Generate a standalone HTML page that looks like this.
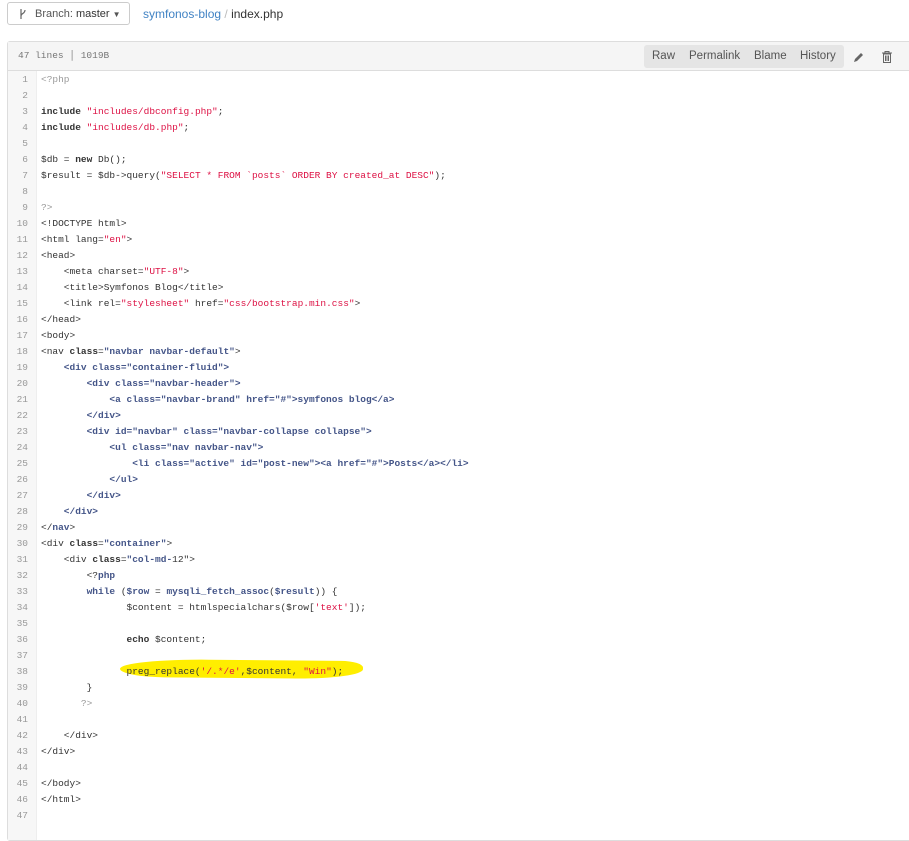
<!DOCTYPE html>
<html><head><meta charset="utf-8"><style>
body{margin:0;background:#fff;width:909px;height:796px;overflow:hidden;position:relative;font-family:"Liberation Sans",sans-serif}
.branch{position:absolute;left:7px;top:2px;width:123px;height:23px;border:1px solid #ccc;border-radius:3px;font-size:11px;color:#555;line-height:23px;box-sizing:border-box}
.branch span{position:absolute;left:27px;top:0}
.bc{position:absolute;left:143px;top:7px;font-size:12px;color:#333}
.box{position:absolute;left:7px;top:41px;width:910px;height:800px;border:1px solid #ddd;border-radius:3px;box-sizing:border-box}
.hdr{height:29px;background:#f5f5f5;border-bottom:1px solid #ddd;position:relative;box-sizing:border-box}
.meta{position:absolute;left:10px;top:8px;font:9.5px "Liberation Mono",monospace;color:#777}
.grp{position:absolute;left:636px;top:3px;width:200px;height:23px;background:#e5e5e5;border-radius:3px;font-size:11.5px;color:#555;line-height:23px}
.grp span{position:absolute}
.gut{position:absolute;left:0;top:29px;width:28px;bottom:0;background:#f7f7f7;border-right:1px solid #eee}
.code{position:absolute;left:0;top:30px;font:9.5px/16px "Liberation Mono",monospace;color:#333;white-space:pre}
.ln{display:inline-block;width:20px;text-align:right;color:#999;margin-right:13px}
.s{color:#d14}.k{font-weight:bold;color:#333}.n{font-weight:bold;color:#445588}.c{color:#999}
.hl{position:absolute;left:120px;top:660px;width:243px;height:18px;background:#ffee00;border-radius:40% 10% 30% 20%/60% 40% 60% 50%;transform:rotate(0.5deg)}
</style></head><body>
<div class="branch"><svg style="position:absolute;left:11px;top:5px" width="8" height="12" viewBox="0 0 8 12"><path d="M2 1v10M2 8c0-3 4-2 4-6" stroke="#666" fill="none" stroke-width="1.2"/></svg><span>Branch: <span style="position:static;color:#333">master</span> <span style="position:static;font-size:8px">▼</span></span></div>
<div class="bc"><span style="color:#4183c4">symfonos-blog</span> <span style="color:#bbb">/</span> index.php</div>
<div class="hl"></div>
<div class="box">
<div class="hdr"><div class="meta">47 lines │ 1019B</div>
<div class="grp"><span style="left:8px">Raw</span><span style="left:45px">Permalink</span><span style="left:110px">Blame</span><span style="left:156px">History</span></div>
<svg style="position:absolute;left:845px;top:9px" width="12" height="12" viewBox="0 0 12 12"><path d="M1 11l1-3 6-6 2 2-6 6z" fill="#666"/></svg>
<svg style="position:absolute;left:874px;top:9px" width="10" height="12" viewBox="0 0 10 12"><path d="M0 2h10M3 2V0.5h4V2M1.5 3h7v8.5h-7zM3.5 4.5v5.5M5 4.5v5.5M6.5 4.5v5.5" stroke="#666" fill="none" stroke-width="1"/></svg>
</div>
<div class="gut"></div>
<div class="code"><span class="ln">1</span><span class="c">&lt;?php</span>
<span class="ln">2</span>
<span class="ln">3</span><span class="k">include</span> <span class="s">"includes/dbconfig.php"</span>;
<span class="ln">4</span><span class="k">include</span> <span class="s">"includes/db.php"</span>;
<span class="ln">5</span>
<span class="ln">6</span>$db = <span class="k">new</span> Db();
<span class="ln">7</span>$result = $db-&gt;query(<span class="s">"SELECT * FROM `posts` ORDER BY created_at DESC"</span>);
<span class="ln">8</span>
<span class="ln">9</span><span class="c">?&gt;</span>
<span class="ln">10</span>&lt;!DOCTYPE html&gt;
<span class="ln">11</span>&lt;html lang=<span class="s">"en"</span>&gt;
<span class="ln">12</span>&lt;head&gt;
<span class="ln">13</span>    &lt;meta charset=<span class="s">"UTF-8"</span>&gt;
<span class="ln">14</span>    &lt;title&gt;Symfonos Blog&lt;/title&gt;
<span class="ln">15</span>    &lt;link rel=<span class="s">"stylesheet"</span> href=<span class="s">"css/bootstrap.min.css"</span>&gt;
<span class="ln">16</span>&lt;/head&gt;
<span class="ln">17</span>&lt;body&gt;
<span class="ln">18</span>&lt;nav <span class="k">class</span>=<span class="n">"navbar navbar-default"</span>&gt;
<span class="ln">19</span><span class="n">    &lt;div class="container-fluid"&gt;</span>
<span class="ln">20</span><span class="n">        &lt;div class="navbar-header"&gt;</span>
<span class="ln">21</span><span class="n">            &lt;a class="navbar-brand" href="#"&gt;symfonos blog&lt;/a&gt;</span>
<span class="ln">22</span><span class="n">        &lt;/div&gt;</span>
<span class="ln">23</span><span class="n">        &lt;div id="navbar" class="navbar-collapse collapse"&gt;</span>
<span class="ln">24</span><span class="n">            &lt;ul class="nav navbar-nav"&gt;</span>
<span class="ln">25</span><span class="n">                &lt;li class="active" id="post-new"&gt;&lt;a href="#"&gt;Posts&lt;/a&gt;&lt;/li&gt;</span>
<span class="ln">26</span><span class="n">            &lt;/ul&gt;</span>
<span class="ln">27</span><span class="n">        &lt;/div&gt;</span>
<span class="ln">28</span><span class="n">    &lt;/div&gt;</span>
<span class="ln">29</span>&lt;/<span class="n">nav</span>&gt;
<span class="ln">30</span>&lt;div <span class="k">class</span>=<span class="n">"container"</span>&gt;
<span class="ln">31</span>    &lt;div <span class="k">class</span>=<span class="n">"col-md-</span>12"&gt;
<span class="ln">32</span>        &lt;?<span class="n">php</span>
<span class="ln">33</span>        <span class="n">while</span> (<span class="n">$row</span> = <span class="n">mysqli_fetch_assoc</span>(<span class="n">$result</span>)) {
<span class="ln">34</span>               $content = htmlspecialchars($row[<span class="s">'text'</span>]);
<span class="ln">35</span>
<span class="ln">36</span>               <span class="k">echo</span> $content;
<span class="ln">37</span>
<span class="ln">38</span>               preg_replace(<span class="s">'/.*/e'</span>,$content, <span class="s">"Win"</span>);
<span class="ln">39</span>        }
<span class="ln">40</span>       <span class="c">?&gt;</span>
<span class="ln">41</span>
<span class="ln">42</span>    &lt;/div&gt;
<span class="ln">43</span>&lt;/div&gt;
<span class="ln">44</span>
<span class="ln">45</span>&lt;/body&gt;
<span class="ln">46</span>&lt;/html&gt;
<span class="ln">47</span></div>
</div>
</body></html>
